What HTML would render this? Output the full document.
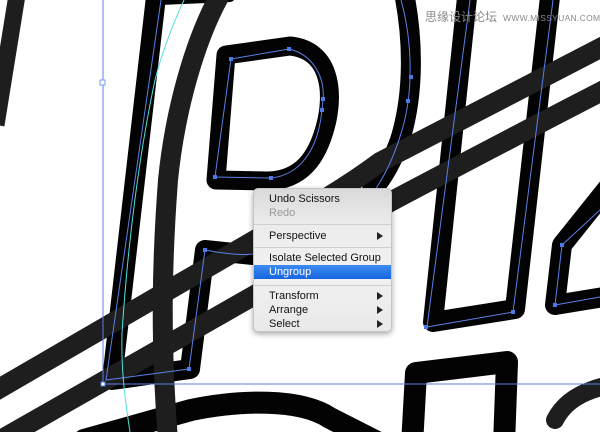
<!DOCTYPE html>
<html><head><meta charset="utf-8"><style>
html,body{margin:0;padding:0;background:#fff;}
#wrap{position:relative;width:600px;height:432px;overflow:hidden;background:#fff;font-family:"Liberation Sans",sans-serif;}
svg{position:absolute;left:0;top:0;}
.wm{position:absolute;left:425px;top:8px;color:#8a8a8a;font-size:12px;font-family:"Liberation Sans","Noto Sans CJK SC",sans-serif;white-space:nowrap;}
.wm span{font-size:8.5px;letter-spacing:0.3px;margin-left:6px;}
.menu{position:absolute;left:253px;top:188px;width:139px;height:144px;border-radius:5px;background:linear-gradient(#d9d9d9,#ececec 25%,#f1f1f1 60%,#e9e9e9);box-shadow:0 2px 6px rgba(0,0,0,0.35);border:1px solid #c4c4c4;box-sizing:border-box;font-size:11px;color:#111;}
.it{position:absolute;left:0;right:0;height:14px;line-height:14px;padding-left:15px;}
.dis{color:#9a9a9a;}
.sel{background:linear-gradient(#3d8bf0,#1665e0);color:#fff;}
.sep{position:absolute;left:0;right:0;height:1px;background:#cfcfcf;}
.ar{position:absolute;right:8px;top:3px;width:0;height:0;border-left:6px solid #222;border-top:4px solid transparent;border-bottom:4px solid transparent;}
</style></head><body><div id="wrap">
<svg width="600" height="432" viewBox="0 0 600 432">
<g fill="none" stroke="#030303" stroke-linejoin="round" stroke-linecap="round">
<path d="M157,-12 L112,380 L190,369 L205,250 L253,255" stroke-width="20"/>
<path d="M160,0 L230,-3" stroke-width="10"/>
<path d="M403,-12 C414,40 414,95 400,140 C392,162 383,178 372,190" stroke-width="20"/>
<path d="M226,55 L290,46 C330,50 333,90 327,120 C318,160 300,180 268,181 L216,180 Z" stroke-width="19"/>
<path d="M468,-12 L433,322 L515,309 L551,-12" stroke-width="20"/>
<path d="M610,185 L562,245 L555,305 L610,296" stroke-width="20"/>
<path d="M84,440 L191,410 C240,400 300,398 330,418 L383,445" stroke-width="22"/>
<path d="M412,445 L416,373 L507,362 L504,445" stroke-width="22"/>
</g>
<g fill="none" stroke="#1e1e1e" stroke-linecap="butt" stroke-linejoin="round">
<path d="M17,-5 L-4,125" stroke-width="17"/>
<path d="M220,-5 C195,40 175,110 168,180 C162,260 160,340 168,440" stroke-width="20"/>
<path d="M-10,394 L260,237 C310,208 345,188 380,162 C450,125 530,85 610,43" stroke-width="20"/>
<path d="M-10,446 L260,292 C310,262 350,225 390,202 C460,165 530,128 610,87" stroke-width="20"/>
<path d="M555,420 C565,400 585,390 610,385" stroke-width="18" stroke-linecap="round"/>
</g>
<g fill="none" stroke="#5b7fe6" stroke-width="1">
<path d="M103,0 V384 H600"/>
<path d="M161,0 L106,380 L189,369 L205,250 C215,252 240,256 253,254"/>
<path d="M231,59 L289,49 C315,55 325,80 323,99 L322,110 C318,150 300,175 271,178 L215,177 Z"/>
<path d="M401,0 C412,40 414,90 402,130 C395,155 385,175 375,190"/>
<path d="M470,0 L427,327 L513,312 L553,0"/>
<path d="M600,210 L562,245 L555,305 L600,297"/>
</g>
<path d="M184,0 C170,30 160,60 155,80 C140,150 128,240 122,333 C121,370 125,400 130,432" fill="none" stroke="#4fe0d8" stroke-width="1"/>
<g fill="#4d79e6">
<rect x="101" y="382" width="4" height="4" fill="#fff" stroke="#4d79e6" stroke-width="1"/>
<rect x="100" y="80" width="5" height="5" fill="#fff" stroke="#7b9cea" stroke-width="1"/>
<rect x="229" y="57" width="4" height="4"/><rect x="287" y="47" width="4" height="4"/>
<rect x="321" y="97" width="4" height="4"/><rect x="320" y="108" width="4" height="4"/>
<rect x="269" y="176" width="4" height="4"/><rect x="213" y="175" width="4" height="4"/>
<rect x="187" y="367" width="4" height="4"/><rect x="203" y="248" width="4" height="4"/>
<rect x="409" y="75" width="4" height="4"/><rect x="406" y="99" width="4" height="4"/>
<rect x="424" y="325" width="4" height="4"/><rect x="511" y="310" width="4" height="4"/>
<rect x="560" y="243" width="4" height="4"/><rect x="553" y="303" width="4" height="4"/>
</g>
</svg>
<div class="wm">思缘设计论坛<span>WWW.MISSYUAN.COM</span></div>
<div class="menu">
<div class="it" style="top:3px">Undo Scissors</div>
<div class="it dis" style="top:17px">Redo</div>
<div class="sep" style="top:35px"></div>
<div class="it" style="top:40px">Perspective<i class="ar"></i></div>
<div class="sep" style="top:58px"></div>
<div class="it" style="top:62px">Isolate Selected Group</div>
<div class="it sel" style="top:76px">Ungroup</div>
<div class="sep" style="top:96px"></div>
<div class="it" style="top:100px">Transform<i class="ar"></i></div>
<div class="it" style="top:114px">Arrange<i class="ar"></i></div>
<div class="it" style="top:128px">Select<i class="ar"></i></div>
</div>
</div></body></html>
